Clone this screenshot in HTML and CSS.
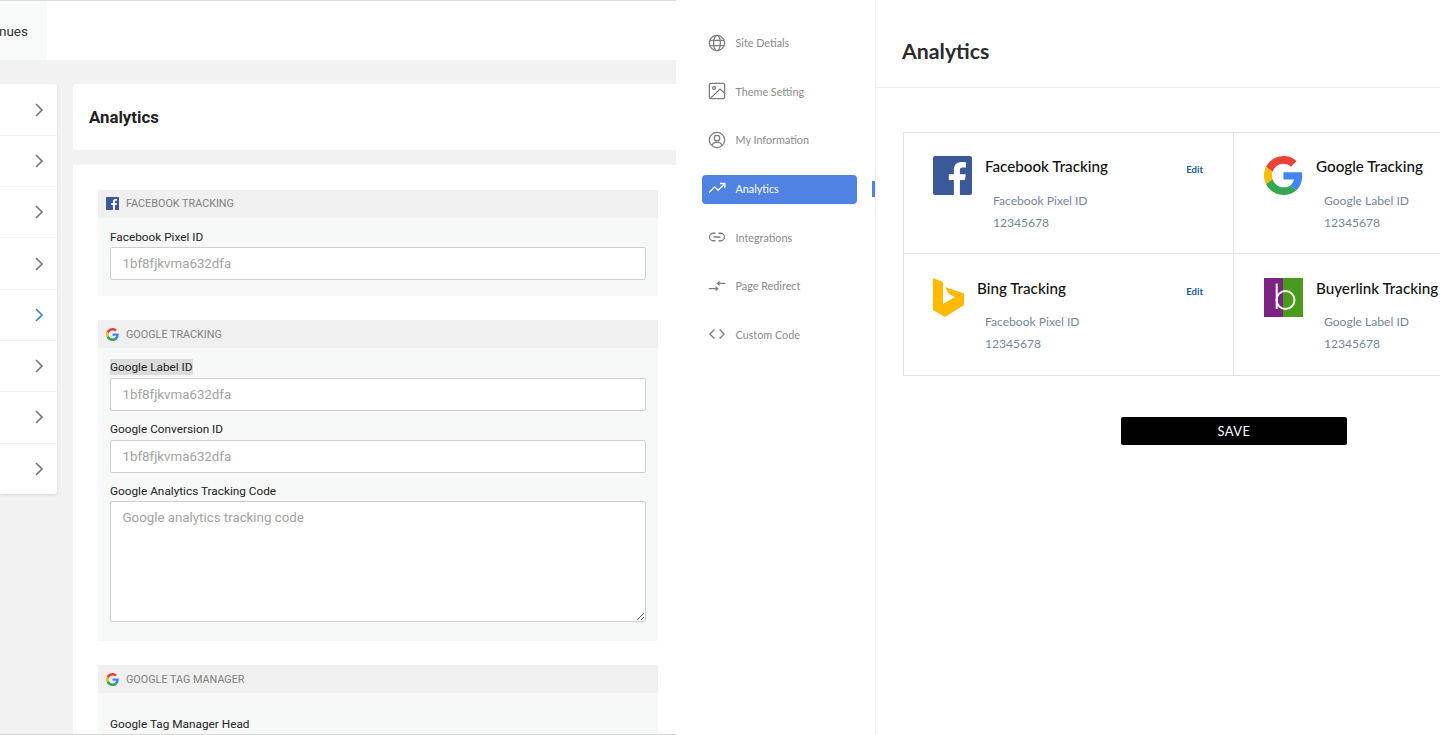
FILE: index.html
```html
<!DOCTYPE html>
<html lang="en">
<head>
    <meta charset="UTF-8">
    <meta name="viewport" content="width=device-width, initial-scale=1.0">
    <title>Analytics</title>
    <link rel="stylesheet" href="styles.css">
</head>
<body>
    <svg class="defs" width="0" height="0">
        <symbol id="g-logo" viewBox="0 0 48 48">
            <path fill="#ea4335" d="M24 9.5c3.54 0 6.71 1.22 9.21 3.6l6.85-6.85C35.9 2.38 30.47 0 24 0 14.62 0 6.51 5.38 2.56 13.22l7.98 6.19C12.43 13.72 17.74 9.5 24 9.5z"/>
            <path fill="#4285f4" d="M46.98 24.55c0-1.57-.15-3.09-.38-4.55H24v9.02h12.94c-.58 2.96-2.26 5.48-4.78 7.18l7.73 6c4.51-4.18 7.09-10.36 7.09-17.65z"/>
            <path fill="#fbbc05" d="M10.53 28.59c-.48-1.45-.76-2.99-.76-4.59s.27-3.14.76-4.59l-7.98-6.19C.92 16.46 0 20.12 0 24c0 3.88.92 7.54 2.56 10.78l7.97-6.19z"/>
            <path fill="#34a853" d="M24 48c6.48 0 11.93-2.13 15.89-5.81l-7.73-6c-2.15 1.45-4.92 2.3-8.16 2.3-6.26 0-11.57-4.22-13.47-9.91l-7.98 6.19C6.51 42.62 14.62 48 24 48z"/>
        </symbol>
        <symbol id="fb-logo" viewBox="0 0 40 40">
            <rect width="40" height="40" rx="2" fill="#3b5998"/>
            <path fill="#fff" d="M27.6 40V24.6h5.2l.8-6h-6v-3.9c0-1.7.5-2.9 3-2.9h3.2V6.4c-.6-.1-2.4-.3-4.6-.3-4.6 0-7.8 2.8-7.8 8v4.5h-5.2v6h5.2V40z"/>
        </symbol>
        <symbol id="chevron" viewBox="0 0 12 16">
            <path d="M3 2l6 6-6 6" fill="none" stroke="currentColor" stroke-width="1.7"/>
        </symbol>
    </svg>

    <div class="old-pane">
        <div class="top-bar">
            <div class="top-tab">nues</div>
        </div>
        <div class="old-main">
            <div class="side-list">
                <div class="side-row"><svg class="chev"><use href="#chevron"/></svg></div>
                <div class="side-row"><svg class="chev"><use href="#chevron"/></svg></div>
                <div class="side-row"><svg class="chev"><use href="#chevron"/></svg></div>
                <div class="side-row"><svg class="chev"><use href="#chevron"/></svg></div>
                <div class="side-row active"><svg class="chev"><use href="#chevron"/></svg></div>
                <div class="side-row"><svg class="chev"><use href="#chevron"/></svg></div>
                <div class="side-row"><svg class="chev"><use href="#chevron"/></svg></div>
                <div class="side-row"><svg class="chev"><use href="#chevron"/></svg></div>
            </div>
            <div class="old-content">
                <div class="old-title"><h2>Analytics</h2></div>
                <div class="old-form">
                    <div class="section">
                        <div class="section-head"><svg class="section-icon"><use href="#fb-logo"/></svg>FACEBOOK TRACKING</div>
                        <div class="section-body">
                            <label class="field-label">Facebook Pixel ID</label>
                            <input class="field" type="text" placeholder="1bf8fjkvma632dfa">
                        </div>
                    </div>
                    <div class="section">
                        <div class="section-head low"><svg class="section-icon"><use href="#g-logo"/></svg>GOOGLE TRACKING</div>
                        <div class="section-body google-body">
                            <label class="field-label"><span class="selected">Google Label ID</span></label>
                            <input class="field spaced" type="text" placeholder="1bf8fjkvma632dfa">
                            <label class="field-label">Google Conversion ID</label>
                            <input class="field spaced" type="text" placeholder="1bf8fjkvma632dfa">
                            <label class="field-label">Google Analytics Tracking Code</label>
                            <textarea class="field area" placeholder="Google analytics tracking code"></textarea>
                        </div>
                    </div>
                    <div class="section">
                        <div class="section-head low"><svg class="section-icon"><use href="#g-logo"/></svg>GOOGLE TAG MANAGER</div>
                        <div class="section-body tall-top">
                            <label class="field-label">Google Tag Manager Head</label>
                        </div>
                    </div>
                </div>
            </div>
        </div>
    </div>

    <div class="new-pane">
        <div class="nav">
            <div class="nav-item">
                <svg class="nav-icon" viewBox="0 0 24 24"><circle cx="12" cy="12" r="10.200"/><ellipse cx="12" cy="12" rx="4.500" ry="10.200"/><path d="M2.600 8.500h18.800M2.600 15.500h18.800"/></svg>
                Site Detials
            </div>
            <div class="nav-item">
                <svg class="nav-icon" viewBox="0 0 24 24"><rect x="1.800" y="1.800" width="20.400" height="20.400" rx="2"/><circle cx="8" cy="8" r="1.800"/><path d="M22 15l-6-5.500L3.500 21.500"/></svg>
                Theme Setting
            </div>
            <div class="nav-item">
                <svg class="nav-icon" viewBox="0 0 24 24"><circle cx="12" cy="12" r="10.200"/><circle cx="12" cy="9.500" r="3.600"/><path d="M5.500 19c1-3 3.500-4.200 6.500-4.200s5.500 1.200 6.500 4.200"/></svg>
                My Information
            </div>
            <div class="nav-item active">
                <svg class="nav-icon" viewBox="0 0 24 24"><path d="M1.500 18l7.500-7.500 4.500 4.500L22 6.500"/><path d="M16 6h6.500v6"/></svg>
                Analytics
            </div>
            <div class="nav-item">
                <svg class="nav-icon" viewBox="0 0 24 24"><path d="M10 7H7a5 5 0 0 0 0 10h3M14 7h3a5 5 0 0 1 0 10h-3M7.500 12h9"/></svg>
                Integrations
            </div>
            <div class="nav-item">
                <svg class="nav-icon" viewBox="0 0 24 24"><path d="M1 15.500h12M10 13l3 2.500-3 2.500M23 8.500H12.500M15.500 6l-3 2.500 3 2.500"/></svg>
                Page Redirect
            </div>
            <div class="nav-item">
                <svg class="nav-icon" viewBox="0 0 24 24"><path d="M8.500 6l-6 6 6 6M15.500 6l6 6-6 6"/></svg>
                Custom Code
            </div>
        </div>
        <div class="main">
            <div class="main-head"><h1>Analytics</h1></div>
            <div class="main-body">
                <div class="track-grid">
                    <div class="track-card">
                        <svg class="track-logo"><use href="#fb-logo"/></svg>
                        <div class="track-text">
                            <h3>Facebook Tracking</h3>
                            <p>Facebook Pixel ID</p>
                            <p>12345678</p>
                        </div>
                        <a class="edit">Edit</a>
                    </div>
                    <div class="track-card">
                        <svg class="track-logo"><use href="#g-logo"/></svg>
                        <div class="track-text">
                            <h3>Google Tracking</h3>
                            <p>Google Label ID</p>
                            <p>12345678</p>
                        </div>
                    </div>
                    <div class="track-card">
                        <svg class="track-logo bing" viewBox="0 0 31 39"><path fill="#ffb900" d="M0 0l10 4v22l12-7-6-3-4-7 19 6.500V27L12 39 0 32z"/></svg>
                        <div class="track-text">
                            <h3>Bing Tracking</h3>
                            <p>Facebook Pixel ID</p>
                            <p>12345678</p>
                        </div>
                        <a class="edit">Edit</a>
                    </div>
                    <div class="track-card">
                        <svg class="track-logo" viewBox="0 0 39 39">
                            <rect width="19" height="39" fill="#7c2484"/>
                            <rect x="19" width="20" height="39" fill="#4a9a1e"/>
                            <path d="M12.700 5.500V31" stroke="#fff" stroke-width="2"/>
                            <circle cx="21.500" cy="22" r="9" fill="none" stroke="#fff" stroke-width="2"/>
                        </svg>
                        <div class="track-text">
                            <h3>Buyerlink Tracking</h3>
                            <p>Google Label ID</p>
                            <p>12345678</p>
                        </div>
                    </div>
                </div>
                <button class="save">SAVE</button>
            </div>
        </div>
    </div>
</body>
</html>
```

FILE: styles.css
```css
* {
    box-sizing: border-box;
}
html, body {
    margin: 0;
    height: 735px;
    overflow: hidden;
}
body {
    display: flex;
    background: #fff;
}
.defs {
    position: absolute;
}

/* left screenshot */
.old-pane {
    width: 676px;
    height: 735px;
    flex: none;
    overflow: hidden;
    background: #f2f2f2;
    border-bottom: 1px solid #d6d6d6;
    font-family: Roboto, sans-serif;
}
.top-bar {
    height: 60px;
    background: #fff;
    border-top: 1px solid #dcdcdc;
}
.top-tab {
    width: 47px;
    height: 59px;
    display: flex;
    justify-content: flex-end;
    align-items: center;
    padding-right: 19px;
    background: #f8f9f9;
    font-size: 13.5px;
    color: #333;
}
.old-main {
    display: flex;
    gap: 16px;
    padding-top: 24px;
}
.side-list {
    width: 57px;
    height: 410px;
    flex: none;
    padding-top: 0.5px;
    background: #fff;
    border-radius: 0 3px 3px 0;
    box-shadow: 0 1px 3px rgba(0,0,0,0.12);
}
.side-row {
    height: 51.3px;
    display: flex;
    align-items: center;
    justify-content: flex-end;
    padding-right: 12px;
    border-bottom: 1px solid #f3f3f3;
    color: #777;
}
.side-row:last-child {
    border-bottom: none;
}
.side-row.active {
    color: #3f7fe0;
}
.chev {
    width: 12px;
    height: 16px;
}
.old-content {
    flex: 1;
}
.old-title {
    height: 66px;
    display: flex;
    align-items: center;
    padding: 0 0 1px 16px;
    background: #fff;
    border-radius: 3px 0 0 3px;
}
.old-title h2 {
    margin: 0;
    font-size: 16.8px;
    font-weight: 700;
    color: #222;
}
.old-form {
    margin-top: 15px;
    height: 600px;
    padding: 25px 18px 0 25px;
    background: #fff;
}
.section {
    margin-bottom: 24px;
    background: #f7f8f8;
}
.section-head {
    height: 28px;
    display: flex;
    align-items: center;
    gap: 7px;
    padding: 0 0 1px 8px;
    background: #f0f0f0;
    font-size: 10.8px;
    color: #808080;
}
.section-head.low {
    padding-bottom: 0;
}
.section-icon {
    width: 13px;
    height: 13px;
}
.section-body {
    padding: 10px 12px 16px;
}
.section-body.google-body {
    padding-top: 11px;
}
.google-body .field-label {
    line-height: 16px;
}
.section-body.tall-top {
    padding-top: 22px;
}
.field-label {
    display: block;
    height: 19px;
    line-height: 18px;
    font-size: 11.8px;
    color: #222;
}
.selected {
    display: inline-block;
    background: #dcdcdc;
}
.field {
    display: block;
    width: 100%;
    height: 33px;
    padding: 0 11.5px;
    background: #fff;
    border: 1px solid #cfcfcf;
    border-radius: 2px;
    font-family: Roboto, sans-serif;
    font-size: 13.3px;
}
.field::placeholder {
    color: #a3a3a3;
}
.field.spaced {
    margin-bottom: 10px;
}
.field.area {
    height: 121px;
    padding-top: 8px;
    margin: -1px 0 3px;
}

/* right screenshot */
.new-pane {
    flex: 1;
    min-width: 0;
    display: flex;
    font-family: Lato, sans-serif;
}
.nav {
    width: 200px;
    flex: none;
    display: flex;
    flex-direction: column;
    gap: 19.65px;
    padding: 29px 18px 0 26px;
    border-right: 1px solid #efefef;
}
.nav-item {
    position: relative;
    width: 155px;
    height: 29px;
    display: flex;
    align-items: center;
    gap: 9.5px;
    padding: 0 0 2px 6px;
    border-radius: 4px;
    font-size: 10.8px;
    color: #8a8a8a;
}
.nav-icon {
    width: 18px;
    height: 18px;
    flex: none;
    fill: none;
    stroke: #7d7d7d;
    stroke-width: 1.7;
}
.nav-item.active {
    background: #4f82e3;
    color: #fff;
}
.nav-item.active .nav-icon {
    stroke: #fff;
}
.nav-item.active::after {
    content: "";
    position: absolute;
    left: 170px;
    top: 6px;
    width: 3px;
    height: 16px;
    background: #4f82e3;
}
.main {
    flex: 1;
    min-width: 0;
    overflow: hidden;
}
.main-head {
    height: 88px;
    display: flex;
    align-items: center;
    padding: 15px 0 0 26px;
    border-bottom: 1px solid #eee;
}
.main-head h1 {
    margin: 0;
    font-size: 21.3px;
    font-weight: 700;
    color: #2b2b2b;
}
.main-body {
    width: 662px;
    margin-left: 27px;
    padding-top: 44px;
    display: flex;
    flex-direction: column;
    align-items: center;
}
.track-grid {
    width: 100%;
    display: grid;
    grid-template-columns: 330px 331px;
    grid-auto-rows: 121px;
    border: solid #e4e4e4;
    border-width: 1px 0 1px 1px;
}
.track-card {
    display: flex;
    align-items: flex-start;
    gap: 13px;
    padding: 23px 30px 0 29px;
    border-right: 1px solid #e4e4e4;
    border-bottom: 1px solid #e4e4e4;
}
.track-card:nth-child(even) {
    padding-left: 30px;
}
.track-card:nth-child(n+3) {
    padding-top: 24px;
    border-bottom: none;
}
.track-logo {
    width: 39px;
    height: 39px;
    flex: none;
}
.track-logo.bing {
    width: 31px;
}
.track-text {
    flex: 1;
}
.track-text h3 {
    margin: 0 0 14px;
    font-size: 15.2px;
    line-height: 20px;
    font-weight: 500;
    white-space: nowrap;
    color: #111;
}
.track-card:nth-child(n+3) h3 {
    margin-bottom: 13px;
}
.track-text p {
    margin: 0 0 0 8px;
    font-size: 12.1px;
    line-height: 22px;
    color: #74869a;
}
.edit {
    margin-top: 8px;
    font-size: 9.6px;
    font-weight: 700;
    color: #1d5c94;
}
.save {
    width: 226px;
    height: 28px;
    margin-top: 41px;
    background: #000;
    border: none;
    border-radius: 2px;
    font-family: Lato, sans-serif;
    font-size: 13px;
    letter-spacing: 0.4px;
    color: #fff;
}
```
